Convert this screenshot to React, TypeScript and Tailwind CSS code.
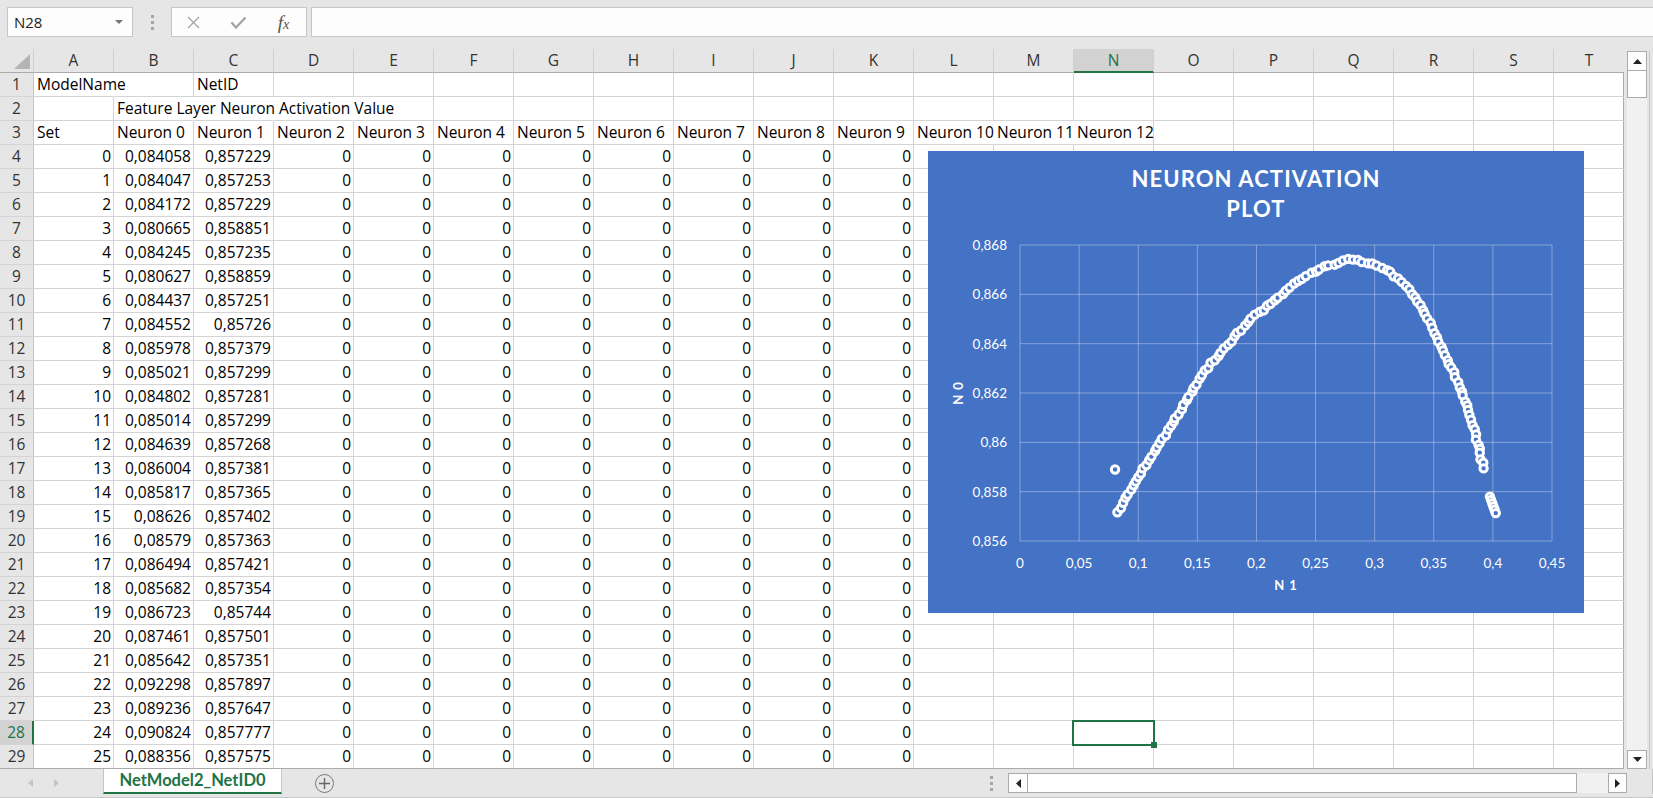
import React from 'react'

const FONT = "font-['Open_Sans',sans-serif]"
const COLS = ['A', 'B', 'C', 'D', 'E', 'F', 'G', 'H', 'I', 'J', 'K', 'L', 'M', 'N', 'O', 'P', 'Q', 'R', 'S', 'T']

const DATA: [string, string][] = [
  ['0,084058', '0,857229'], ['0,084047', '0,857253'], ['0,084172', '0,857229'], ['0,080665', '0,858851'],
  ['0,084245', '0,857235'], ['0,080627', '0,858859'], ['0,084437', '0,857251'], ['0,084552', '0,85726'],
  ['0,085978', '0,857379'], ['0,085021', '0,857299'], ['0,084802', '0,857281'], ['0,085014', '0,857299'],
  ['0,084639', '0,857268'], ['0,086004', '0,857381'], ['0,085817', '0,857365'], ['0,08626', '0,857402'],
  ['0,08579', '0,857363'], ['0,086494', '0,857421'], ['0,085682', '0,857354'], ['0,086723', '0,85744'],
  ['0,087461', '0,857501'], ['0,085642', '0,857351'], ['0,092298', '0,857897'], ['0,089236', '0,857647'],
  ['0,090824', '0,857777'], ['0,088356', '0,857575'],
]

type Cell = { t?: string; r?: boolean; open?: boolean }

// rows 1-3 are the header block; text spilling over hides the gridline
const HEAD_ROWS: Cell[][] = [
  [{ t: 'ModelName', open: true }, {}, { t: 'NetID' }],
  [{}, { t: 'Feature Layer Neuron Activation Value', open: true }, { open: true }, { open: true }],
  [
    { t: 'Set' },
    ...Array.from({ length: 10 }, (_, i) => ({ t: `Neuron ${i}` })),
    { t: 'Neuron 10', open: true },
    { t: 'Neuron 11', open: true },
    { t: 'Neuron 12' },
  ],
]

function buildRows(): Cell[][] {
  const rows = HEAD_ROWS.map(r => COLS.map((_, i) => r[i] || {}))
  DATA.forEach(([a, b], i) => {
    rows.push(
      COLS.map((_, c) => {
        if (c === 0) return { t: String(i), r: true }
        if (c === 1) return { t: a, r: true }
        if (c === 2) return { t: b, r: true }
        if (c <= 10) return { t: '0', r: true }
        return {}
      })
    )
  })
  return rows
}

// chart geometry, in chart-local px
const X = (v: number) => 92 + (v / 0.45) * 532
const Y = (v: number) => 94 + ((0.868 - v) / 0.012) * 296

const CURVE: [number, number][] = [
  [0.0829, 0.8572], [0.1, 0.8586], [0.1212, 0.8602], [0.141, 0.8617], [0.155, 0.8628],
  [0.1706, 0.8637], [0.1819, 0.8643], [0.1973, 0.8651], [0.2115, 0.8656], [0.2284, 0.8663],
  [0.2396, 0.8667], [0.2566, 0.8671], [0.2763, 0.8674], [0.2848, 0.8674], [0.2989, 0.8672],
  [0.313, 0.8669], [0.3271, 0.8663], [0.3383, 0.8656], [0.3468, 0.8648], [0.3539, 0.8641],
  [0.3623, 0.8633], [0.3694, 0.8625], [0.375, 0.8619], [0.3807, 0.861], [0.3866, 0.8601],
  [0.3922, 0.8589],
]

function along(pts: [number, number][], step: number) {
  const p = pts.map(([a, b]) => [X(a), Y(b)])
  const out: [number, number][] = []
  let d = 0
  for (let i = 0; i < p.length - 1; i++) {
    const [x1, y1] = p[i]
    const [x2, y2] = p[i + 1]
    const len = Math.hypot(x2 - x1, y2 - y1)
    while (d <= len) {
      const t = d / len
      out.push([x1 + (x2 - x1) * t, y1 + (y2 - y1) * t])
      d += step
    }
    d -= len
  }
  return out
}

const rnd = (i: number) => {
  const s = Math.sin(i * 12.9898 + 78.233) * 43758.5453
  return s - Math.floor(s)
}

const MARKERS: [number, number][] = [
  ...along(CURVE, 5).map(([x, y], i) => [x + (rnd(i) - 0.5) * 2, y + (rnd(i + 700) - 0.5) * 2] as [number, number]),
  ...along([[0.3975, 0.8578], [0.4034, 0.857]], 3.5),
  [X(0.0804), Y(0.8589)],
]

function Chart() {
  const yTicks = ['0,868', '0,866', '0,864', '0,862', '0,86', '0,858', '0,856']
  const xTicks = ['0', '0,05', '0,1', '0,15', '0,2', '0,25', '0,3', '0,35', '0,4', '0,45']
  return (
    <div className="absolute left-[928px] top-[102px] w-[656px] h-[462px] bg-[#4472c4] flex flex-col font-['Lato',sans-serif]">
      <div className="pt-[13px] text-center text-white font-bold text-[22px] leading-[30px] tracking-[0.05em]">
        NEURON ACTIVATION
        <br />
        PLOT
      </div>
      <svg width={656} height={389} viewBox="0 73 656 389" className="block">
        {yTicks.map((_, k) => (
          <line key={'h' + k} x1={92} x2={624} y1={94 + k * 49.333} y2={94 + k * 49.333} stroke="#fff" strokeOpacity={0.35} />
        ))}
        {xTicks.map((_, k) => (
          <line key={'v' + k} x1={92 + k * 59.11} x2={92 + k * 59.11} y1={94} y2={390} stroke="#fff" strokeOpacity={0.35} />
        ))}
        {yTicks.map((t, k) => (
          <text key={'yl' + k} x={79} y={94 + k * 49.333 + 5} textAnchor="end" fill="#fff" fontSize={13.5} fontFamily="Lato, sans-serif">{t}</text>
        ))}
        {xTicks.map((t, k) => (
          <text key={'xl' + k} x={92 + k * 59.11} y={417} textAnchor="middle" fill="#fff" fontSize={13.5} fontFamily="Lato, sans-serif">{t}</text>
        ))}
        <text x={358} y={439} textAnchor="middle" fill="#fff" fontSize={13} fontWeight={700} letterSpacing={1} fontFamily="Lato, sans-serif">N 1</text>
        <text x={35} y={242} transform="rotate(-90 35 242)" textAnchor="middle" fill="#fff" fontSize={13} fontWeight={700} letterSpacing={1} fontFamily="Lato, sans-serif">N 0</text>
        {MARKERS.map(([x, y], i) => (
          <circle key={i} cx={x} cy={y} r={3.7} fill="#4472c4" stroke="#fff" strokeWidth={3} />
        ))}
      </svg>
    </div>
  )
}

function Toolbar() {
  return (
    <div className="h-[49px] shrink-0 flex items-start pt-[7px] pl-[7px]">
      <div className="w-[126px] h-[30px] bg-[#fdfdfd] border border-[#c6c6c6] flex items-center justify-between pl-[6px] pr-[9px]">
        <span className="text-[15px] text-[#222]">N28</span>
        <svg width="8" height="4" viewBox="0 0 8 4"><path d="M0 0h8L4 4z" fill="#777" /></svg>
      </div>
      <div className="w-[38px] h-[30px] flex flex-col items-center justify-center gap-[3px]">
        <span className="w-[3px] h-[3px] bg-[#a6a6a6]" />
        <span className="w-[3px] h-[3px] bg-[#a6a6a6]" />
        <span className="w-[3px] h-[3px] bg-[#a6a6a6]" />
      </div>
      <div className="w-[136px] h-[30px] bg-[#fdfdfd] border border-[#c6c6c6] flex items-center">
        <div className="w-[43px] flex justify-center">
          <svg width="13" height="13" viewBox="0 0 13 13">
            <path d="M1 1l11 11M12 1L1 12" stroke="#a3a3a3" strokeWidth="1.3" />
          </svg>
        </div>
        <div className="w-[46px] flex justify-center">
          <svg width="17" height="13" viewBox="0 0 17 13">
            <path d="M1.5 6.5l4.5 5L15.5 1.5" stroke="#a3a3a3" strokeWidth="2.2" fill="none" />
          </svg>
        </div>
        <div className="w-[45px] flex justify-center">
          <span className="font-['Liberation_Serif',serif] italic text-[19px] leading-none text-[#555]">
            f<span className="text-[14px]">x</span>
          </span>
        </div>
      </div>
      <div className="ml-[4px] flex-1 h-[30px] bg-[#fdfdfd] border border-r-0 border-[#c6c6c6]" />
    </div>
  )
}

function Sheet() {
  const rows = buildRows()
  return (
    <div className="relative w-[1624px] h-[720px] bg-white">
      {/* column headers */}
      <div className="flex h-[24px] bg-[#e6e6e6]">
        <div className="w-[34px] h-[24px] border-r border-b border-r-[#d0d0d0] border-b-[#ababab] flex items-end justify-end pr-[3px] pb-[3px]">
          <svg width="16" height="15" viewBox="0 0 16 15"><path d="M16 0v15H0z" fill="#b4b4b4" /></svg>
        </div>
        {COLS.map((c, i) =>
          c === 'N' ? (
            <div key={c} className="w-[80px] h-[24px] border-r border-b-2 border-r-[#d0d0d0] border-b-[#217346] bg-[#d2d2d2] text-center leading-[22px] text-[15.5px] text-[#217346]">{c}</div>
          ) : (
            <div key={c} className={`${i === 19 ? 'w-[70px]' : 'w-[80px] border-r'} h-[24px] border-b border-r-[#d0d0d0] border-b-[#ababab] text-center leading-[23px] text-[15.5px] text-[#333]`}>{c}</div>
          )
        )}
      </div>

      {rows.map((row, r) => {
        const n = r + 1
        const sel = n === 28
        const lastRow = n === 29
        return (
          <div key={n} className="flex h-[24px]">
            <div className={`w-[34px] h-[24px] border-b text-center text-[15.5px] leading-[23px] ${sel ? 'bg-[#d2d2d2] text-[#217346] border-r-2 border-r-[#217346]' : 'bg-[#e6e6e6] text-[#333] border-r border-r-[#c6c6c6]'} ${lastRow ? 'border-b-[#ababab]' : 'border-b-[#d4d4d4]'}`}>{n}</div>
            {row.map((cell, c) => (
              <div
                key={c}
                className={`${c === 19 ? 'w-[70px] border-r-[#ababab]' : 'w-[80px] border-r-[#d4d4d4]'} ${cell.open ? 'border-r-transparent' : ''} h-[24px] border-r border-b ${lastRow ? 'border-b-[#ababab]' : 'border-b-[#d4d4d4]'} text-[15.5px] leading-[23px] whitespace-nowrap ${cell.r ? 'text-right pr-[2px]' : 'pl-[3px]'}`}
              >
                {cell.t}
              </div>
            ))}
          </div>
        )
      })}

      <Chart />

      {/* active cell N28 */}
      <div className="absolute left-[1072px] top-[671px] w-[83px] h-[26px] border-2 border-[#217346]">
        <div className="absolute right-[-4px] bottom-[-4px] w-[6px] h-[6px] bg-[#217346]" />
      </div>
    </div>
  )
}

function VScroll() {
  return (
    <div className="w-[29px] h-[720px] flex pt-[2px] pl-[3px]">
      <div className="w-[20px] flex flex-col">
        <div className="h-[20px] bg-[#fdfdfd] border border-[#ababab] flex items-center justify-center">
          <svg width="9" height="5" viewBox="0 0 9 5"><path d="M4.5 0L9 5H0z" fill="#222" /></svg>
        </div>
        <div className="h-[28px] -mt-px bg-white border border-[#ababab]" />
        <div className="flex-1 bg-[#f1f1f1]" />
        <div className="h-[19px] bg-[#fdfdfd] border border-[#ababab] flex items-center justify-center">
          <svg width="9" height="5" viewBox="0 0 9 5"><path d="M0 0h9L4.5 5z" fill="#222" /></svg>
        </div>
      </div>
      <div className="ml-[2px] w-px bg-[#c6c6c6]" />
    </div>
  )
}

function BottomBar() {
  return (
    <div className="h-[29px] flex items-start border-b border-[#c6c6c6]">
      <div className="w-[103px] h-[28px] flex items-center pl-[28px] gap-[21px]">
        <svg width="5" height="8" viewBox="0 0 5 8"><path d="M5 0v8L0 4z" fill="#c4c4c4" /></svg>
        <svg width="5" height="8" viewBox="0 0 5 8"><path d="M0 0v8l5-4z" fill="#c4c4c4" /></svg>
      </div>
      <div className="w-[179px] h-[25px] bg-white border-x border-[#c6c6c6] border-b-2 border-b-[#217346] flex items-center justify-center text-[16.5px] font-bold text-[#217346] font-['Lato',sans-serif]">
        NetModel2_NetID0
      </div>
      <div className="ml-[33px] mt-[5px] w-[19px] h-[19px] rounded-full border-[1.5px] border-[#7a7a7a] flex items-center justify-center">
        <svg width="11" height="11" viewBox="0 0 11 11"><path d="M5.5 0v11M0 5.5h11" stroke="#666" strokeWidth="1.4" /></svg>
      </div>
      <div className="flex-1" />
      <div className="w-[17px] h-[28px] flex flex-col items-center justify-center gap-[3px]">
        <span className="w-[3px] h-[3px] bg-[#a6a6a6]" />
        <span className="w-[3px] h-[3px] bg-[#a6a6a6]" />
        <span className="w-[3px] h-[3px] bg-[#a6a6a6]" />
      </div>
      <div className="ml-[8px] mt-[4px] w-[619px] h-[20px] flex">
        <div className="w-[20px] h-[20px] bg-[#fdfdfd] border border-[#ababab] flex items-center justify-center">
          <svg width="5" height="9" viewBox="0 0 5 9"><path d="M5 0v9L0 4.5z" fill="#222" /></svg>
        </div>
        <div className="w-[550px] h-[20px] -ml-px bg-white border border-[#ababab]" />
        <div className="flex-1 bg-[#f1f1f1]" />
        <div className="w-[19px] h-[20px] bg-[#fdfdfd] border border-[#ababab] flex items-center justify-center">
          <svg width="5" height="9" viewBox="0 0 5 9"><path d="M0 0v9l5-4.5z" fill="#222" /></svg>
        </div>
      </div>
      <div className="ml-[25px] w-px h-[25px] bg-[#c6c6c6]" />
    </div>
  )
}

export default function App() {
  return (
    <div className={`w-[1653px] h-[798px] bg-[#e6e6e6] flex flex-col overflow-hidden text-black ${FONT}`}>
      <Toolbar />
      <div className="flex h-[720px] shrink-0">
        <Sheet />
        <VScroll />
      </div>
      <BottomBar />
    </div>
  )
}
